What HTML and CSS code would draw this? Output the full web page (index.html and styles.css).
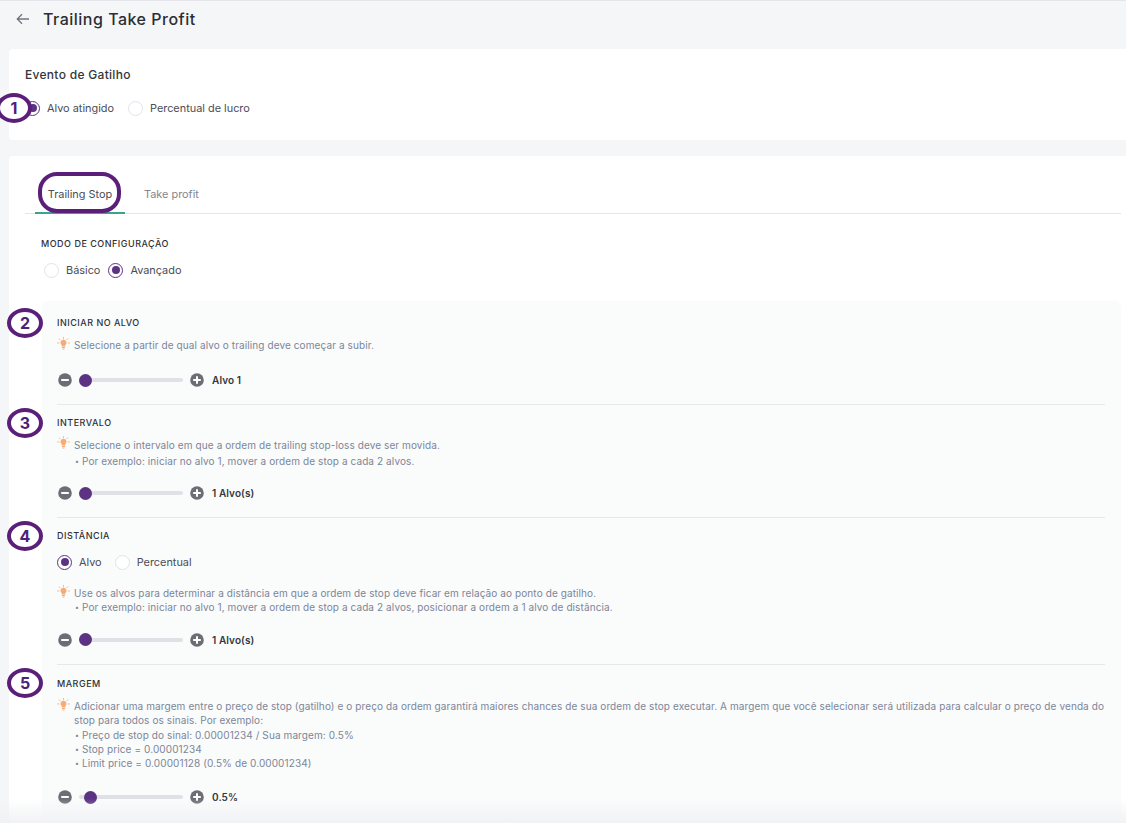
FILE: index.html
```html
<!DOCTYPE html>
<html lang="pt">
<head>
<meta charset="utf-8">
<title>Trailing Take Profit</title>
<link rel="stylesheet" href="styles.css">
</head>
<body>
<svg class="defs" width="0" height="0" aria-hidden="true">
  <symbol id="bulb" viewBox="0 0 14 14">
    <path d="M7 .4v1.700M2.300 1.900l1.200 1.200M11.700 1.900l-1.200 1.200M.4 6.400h1.700M11.900 6.400h1.700" stroke="#f6b98a" stroke-width="1" fill="none" stroke-linecap="round"/>
    <path d="M7 3a3.200 3.200 0 0 1 1.900 5.800v1.300H5.100V8.800A3.200 3.200 0 0 1 7 3z" fill="#f6ad75"/>
    <path d="M5.300 10.800h3.400v1H5.300zM6 12.400h2v1H6z" fill="#f6ad75"/>
  </symbol>
  <symbol id="minus" viewBox="0 0 14 14">
    <circle cx="7" cy="7" r="6.800" fill="#6b6e75"/><rect x="3.200" y="6" width="7.600" height="2" fill="#fff"/>
  </symbol>
  <symbol id="plus" viewBox="0 0 14 14">
    <circle cx="7" cy="7" r="6.800" fill="#6b6e75"/><path d="M3.200 6H6V3.200h2V6h2.800v2H8v2.800H6V8H3.200z" fill="#fff"/>
  </symbol>
</svg>

<header class="topbar">
  <svg class="back" width="14" height="12" viewBox="0 0 14 12"><path d="M13 6H1.500M6 1.300 1.300 6 6 10.700" stroke="#70747b" stroke-width="1.300" fill="none"/></svg>
  <h1>Trailing Take Profit</h1>
</header>

<section class="card trigger">
  <h2>Evento de Gatilho</h2>
  <div class="radios">
    <label class="radio"><i class="dot on"></i>Alvo atingido</label>
    <label class="radio"><i class="dot"></i>Percentual de lucro</label>
  </div>
</section>

<section class="card main">
  <nav class="tabs">
    <span class="tab active">Trailing Stop</span>
    <span class="tab">Take profit</span>
  </nav>
  <div class="mode">
    <h3>MODO DE CONFIGURAÇÃO</h3>
    <div class="radios">
      <label class="radio"><i class="dot"></i>Básico</label>
      <label class="radio"><i class="dot on"></i>Avançado</label>
    </div>
  </div>
  <div class="panel">
    <div class="block b1">
      <h3>INICIAR NO ALVO</h3>
      <div class="hint"><svg class="bulb"><use href="#bulb"/></svg><p>Selecione a partir de qual alvo o trailing deve começar a subir.</p></div>
      <div class="slider"><svg class="pm"><use href="#minus"/></svg><div class="track"><b></b></div><svg class="pm"><use href="#plus"/></svg><span>Alvo 1</span></div>
    </div>
    <div class="block b2">
      <h3>INTERVALO</h3>
      <div class="hint"><svg class="bulb"><use href="#bulb"/></svg><p>Selecione o intervalo em que a ordem de trailing stop-loss deve ser movida.<br><small>•</small> Por exemplo: iniciar no alvo 1, mover a ordem de stop a cada 2 alvos.</p></div>
      <div class="slider"><svg class="pm"><use href="#minus"/></svg><div class="track"><b></b></div><svg class="pm"><use href="#plus"/></svg><span>1 Alvo(s)</span></div>
    </div>
    <div class="block b3">
      <h3>DISTÂNCIA</h3>
      <div class="radios">
        <label class="radio"><i class="dot on"></i>Alvo</label>
        <label class="radio"><i class="dot"></i>Percentual</label>
      </div>
      <div class="hint"><svg class="bulb"><use href="#bulb"/></svg><p>Use os alvos para determinar a distância em que a ordem de stop deve ficar em relação ao ponto de gatilho.<br><small>•</small> Por exemplo: iniciar no alvo 1, mover a ordem de stop a cada 2 alvos, posicionar a ordem a 1 alvo de distância.</p></div>
      <div class="slider"><svg class="pm"><use href="#minus"/></svg><div class="track"><b></b></div><svg class="pm"><use href="#plus"/></svg><span>1 Alvo(s)</span></div>
    </div>
    <div class="block b4">
      <h3>MARGEM</h3>
      <div class="hint"><svg class="bulb"><use href="#bulb"/></svg><p>Adicionar uma margem entre o preço de stop (gatilho) e o preço da ordem garantirá maiores chances de sua ordem de stop executar. A margem que você selecionar será utilizada para calcular o preço de venda do stop para todos os sinais. Por exemplo:<br><small>•</small> Preço de stop do sinal: 0.00001234 / Sua margem: 0.5%<br><small>•</small> Stop price = 0.00001234<br><small>•</small> Limit price = 0.00001128 (0.5% de 0.00001234)</p></div>
      <div class="slider"><svg class="pm"><use href="#minus"/></svg><div class="track mid"><b></b></div><svg class="pm"><use href="#plus"/></svg><span>0.5%</span></div>
    </div>
  </div>
</section>

<div class="fade"></div>

<span class="mark m1">1</span>
<span class="mark m2">2</span>
<span class="mark m3">3</span>
<span class="mark m4">4</span>
<span class="mark m5">5</span>
<span class="mark-tab"></span>
</body>
</html>
```
FILE: styles.css
```css
* { box-sizing: border-box; }
html, body { height: 823px; overflow: hidden; }
body {
  margin: 0;
  background: #f5f6f8;
  border-top: 1px solid #e4e6ec;
  font-family: Inter, "Liberation Sans", sans-serif;
  color: #33363c;
  position: relative;
}
.defs { position: absolute; }
h1, h2, h3, p { margin: 0; }

.topbar { height: 48px; display: flex; align-items: center; padding: 0 0 12px 16px; gap: 13px; }
.back { flex: none; }
h1 { font-size: 16px; font-weight: 500; letter-spacing: .5px; color: #2c2e33; line-height: 36px; }

.card { background: #fff; border-radius: 4px 0 0 4px; margin-left: 9px; }
.trigger { height: 91px; padding: 18px 16px 0; }
h2 { font-size: 12px; font-weight: 500; letter-spacing: .3px; line-height: 16px; color: #33363c; }
.trigger .radios { margin-top: 17px; gap: 14px; }

.radios { display: flex; align-items: center; gap: 8px; }
.radio { display: flex; align-items: center; gap: 7px; font-size: 10.900px; line-height: 16px; color: #4a4d55; }
.dot { width: 15px; height: 15px; border-radius: 50%; border: 1px solid #e1e3ea; background: #fff; flex: none; position: relative; }
.dot.on { border-color: #5c3382; }
.dot.on::after { content: ""; position: absolute; left: 2.500px; top: 2.500px; width: 8px; height: 8px; border-radius: 50%; background: #5c3382; }

.main { margin-top: 16px; padding: 16px 5px 0 16px; height: 680px; }
.tabs { display: flex; height: 42px; border-bottom: 1px solid #e3e5e9; padding-left: 10px; gap: 0; }
.tab { width: 90px; height: 42px; font-size: 10.900px; line-height: 44px; text-align: center; color: #83868d; }
.tab + .tab { width: auto; margin-left: 19px; }
.tab.active { color: #4a4d55; border-bottom: 2px solid #3aa48c; }

.mode { padding: 23px 0 0 16px; height: 87px; }
.mode h3 { margin-bottom: 11px; }
.mode .radios { padding-left: 3px; }

h3 { font-size: 9px; font-weight: 500; line-height: 14px; letter-spacing: .5px; color: #2f3137; }

.panel { margin-left: 17px; background: #fafbfb; border-radius: 6px; padding: 15px 16px 0 15px; height: 521px; }
.block { border-bottom: 1px solid #e6e8e9; }
.b1 { height: 89px; }
.b2 { height: 113px; padding-top: 11px; }
.b3 { height: 147px; padding-top: 11px; }
.b4 { border-bottom: 0; padding-top: 12px; }

.hint { display: flex; gap: 4px; margin-top: 8px; font-size: 10px; letter-spacing: .1px; line-height: 14.300px; color: #7c8698; }
.hint small { font-size: 7px; line-height: 0; margin-left: 1px; vertical-align: 1px; }
.bulb { width: 13px; height: 13px; flex: none; margin-top: -1px; }
.slider { display: flex; align-items: center; height: 16px; font-size: 10px; font-weight: 600; letter-spacing: .1px; color: #33363c; margin-top: 20px; }
.pm { width: 14px; height: 14px; flex: none; margin-left: 1px; }
.track { width: 104px; height: 4px; background: #dfe1e7; border-radius: 2px; margin: 0 6px 0 7px; position: relative; }
.track b { position: absolute; left: 0; top: -4.500px; width: 13px; height: 13px; border-radius: 50%; background: #5c3382; }
.track.mid b { left: 5px; }
.slider span { margin-left: 8px; }

.b2 .hint { margin-top: 7px; line-height: 16px; }
.b2 .slider { margin-top: 16px; }
.b3 .radios { margin-top: 11px; gap: 13px; }
.b3 .hint { margin-top: 16px; }
.b3 .slider { margin-top: 17px; }
.b4 .slider { margin-top: 19px; }

.fade { position: absolute; left: 0; right: 0; bottom: 0; height: 24px; background: linear-gradient(rgba(240,241,243,0), rgba(240,241,243,.9)); pointer-events: none; }

.mark {
  position: absolute; left: 7px; width: 36px; height: 30px;
  border: 4px solid #5b1f7a; border-radius: 50%;
  background: #fff; color: #4b2277;
  font-size: 16px; font-weight: 700; line-height: 22px; text-align: center;
}
.m1 { left: -4px; top: 92px; }
.m2 { top: 307px; }
.m3 { top: 407px; }
.m4 { top: 520px; }
.m5 { top: 667px; }
.mark-tab {
  position: absolute; left: 38px; top: 171px; width: 83px; height: 41px;
  border: 4px solid #5b1f7a; border-radius: 19px;
}
```
